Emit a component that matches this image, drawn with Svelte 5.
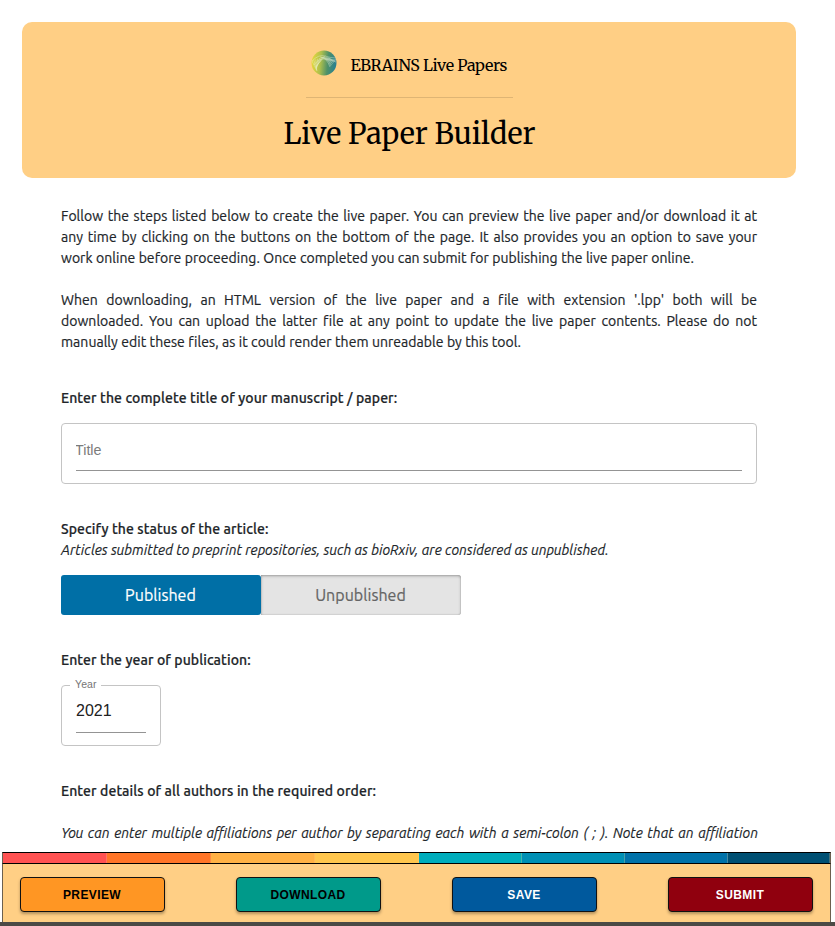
<script>
  const paragraphs = [
    [
      ['Follow the steps listed below to create the live paper. You can preview the live paper and/or download it at', 696],
      ['any time by clicking on the buttons on the bottom of the page. It also provides you an option to save your', 696],
      ['work online before proceeding. Once completed you can submit for publishing the live paper online.', 633]
    ],
    [
      ["When downloading, an HTML version of the live paper and a file with extension '.lpp' both will be", 696],
      ['downloaded. You can upload the latter file at any point to update the live paper contents. Please do not', 696],
      ['manually edit these files, as it could render them unreadable by this tool.', 460]
    ]
  ];
  const stripes = ['#ff5252', '#ff7528', '#ffb145', '#ffc64d', '#00adbc', '#0090b5', '#0072a9', '#005073'];
  const actions = [
    { label: 'PREVIEW', bg: '#ff9623', fg: '#000' },
    { label: 'DOWNLOAD', bg: '#009a8a', fg: '#000' },
    { label: 'SAVE', bg: '#00599d', fg: '#fff' },
    { label: 'SUBMIT', bg: '#90000e', fg: '#fff' }
  ];
  const rays = Array.from({ length: 8 }, (_, i) => i);
  let title = $state('');
  let year = $state('2021');
  let published = $state(true);
</script>

<main>
  <header>
    <div class="brand">
      <svg width="26" height="26" viewBox="0 0 26 26" aria-hidden="true">
        <defs>
          <linearGradient id="globe" x1="0" x2="1" y1=".45" y2=".55">
            <stop offset="0" stop-color="#e6d83c" />
            <stop offset=".35" stop-color="#b0c04c" />
            <stop offset=".65" stop-color="#4f9168" />
            <stop offset="1" stop-color="#277f94" />
          </linearGradient>
          <clipPath id="disc"><circle cx="13" cy="13" r="12.5" /></clipPath>
        </defs>
        <circle cx="13" cy="13" r="12.5" fill="url(#globe)" />
        <g clip-path="url(#disc)" fill="none" stroke="#eef5dc" stroke-width=".5" opacity=".75">
          {#each rays as i}
            <path d={`M${6 - i * 0.2} ${21 - i * 0.6} L${1 + i * 1.9} ${11 - i * 0.75}`} />
            <path d={`M${9 + i * 1.2} ${7 + i * 0.1} Q${16 + i} ${8 + i * 0.5} ${19 + i * 0.9} ${17 - i * 1.1}`} />
          {/each}
          <path d="M1 11 Q8 4 14 6 T25 8 M3 15 Q8 8 14 9 T25 12" />
        </g>
      </svg>
      <span>EBRAINS Live Papers</span>
    </div>
    <h1>Live Paper Builder</h1>
  </header>

  <div class="content">
    {#each paragraphs as lines}
      <div class="para">
        {#each lines as [text, width]}<div class="line" style:width={`${width}px`}>{text}</div>{/each}
      </div>
    {/each}

    <section class="first">
      <h2>Enter the complete title of your manuscript / paper:</h2>
      <label class="field wide"><input placeholder="Title" bind:value={title} /></label>
    </section>

    <section>
      <h2>Specify the status of the article:</h2>
      <div class="note">Articles submitted to preprint repositories, such as bioRxiv, are considered as unpublished.</div>
      <div class="toggle">
        <button class:on={published} onclick={() => (published = true)}>Published</button>
        <button class:on={!published} onclick={() => (published = false)}>Unpublished</button>
      </div>
    </section>

    <section>
      <h2>Enter the year of publication:</h2>
      <label class="field year"><span>Year</span><input bind:value={year} /></label>
    </section>

    <section>
      <h2>Enter details of all authors in the required order:</h2>
      <div class="note authors">You can enter multiple affiliations per author by separating each with a semi-colon ( ; ). Note that an affiliation</div>
    </section>
  </div>
</main>

<footer>
  <div class="stripes">
    {#each stripes as color}<i style:background={color}></i>{/each}
  </div>
  <div class="actions">
    {#each actions as a}
      <button style:background={a.bg} style:color={a.fg}>{a.label}</button>
    {/each}
  </div>
  <div class="edge"></div>
</footer>

<style>
  :global(body) { margin: 0; background: #fff; overflow: hidden; }
  * { box-sizing: border-box; }
  main { width: 835px; height: 926px; overflow: hidden; padding: 22px 39px 0 22px; font: 400 14px/21px Ubuntu, 'Noto Sans', sans-serif; color: #212529; }
  header { height: 156px; border-radius: 10px; background: #ffcf85; color: #000; display: flex; flex-direction: column; align-items: center; font-family: Merriweather, 'DejaVu Serif Condensed', 'DejaVu Serif', serif; }
  .brand { width: 207px; height: 76px; padding: 29px 6px 0 5px; display: flex; justify-content: space-between; border-bottom: 1px solid #dfb574; font-size: 16px; line-height: 28px; letter-spacing: -.33px; white-space: nowrap; }
  .brand svg { margin-top: -1px; }
  .brand span { width: 156px; }
  h1 { margin: 15px 0 0 1px; font-size: 28.8px; line-height: 42px; font-weight: 400; white-space: nowrap; }
  .content { width: 735px; padding: 28px 0 0 39px; }
  .para { margin: 0 0 21px; letter-spacing: .04px; -webkit-text-stroke: .2px currentColor; }
  .line { white-space: nowrap; text-align: justify; text-align-last: justify; }
  .first { margin-top: 35px; }
  section { margin-bottom: 35px; }
  h2 { margin: 0; font-size: 14px; line-height: 21px; font-weight: 500; letter-spacing: .105px; -webkit-text-stroke: .2px currentColor; }
  .note { font-style: italic; white-space: nowrap; -webkit-text-stroke: .15px currentColor; }
  .field { position: relative; display: block; height: 61px; margin-top: 14px; border: 1px solid #c4c4c4; border-radius: 4px; padding: 12px 14px; }
  .year { width: 100px; }
  .field input { display: block; width: 100%; height: 35px; padding: 0 0 8px; border: 0; border-bottom: 1px solid #949494; outline: 0; background: none; font: 16px 'Liberation Sans', sans-serif; color: #212121; }
  .wide input { font-size: 14.3px; padding-bottom: 6px; text-indent: -1px; }
  .field input::placeholder { color: #7b7b7b; opacity: 1; }
  .field span { position: absolute; left: 8px; top: -9px; padding: 0 4px 0 5px; background: #fff; color: #757575; font: 10.5px/14px 'Liberation Sans', sans-serif; letter-spacing: .1px; }
  .toggle { display: flex; width: 400px; height: 40px; margin-top: 14px; }
  .toggle button { flex: 1; border: 0; padding: 0 1px 0 0; border-radius: 0 3px 3px 0; background: #e4e4e4; color: #646464; box-shadow: inset 0 1px 3px rgba(0,0,0,.3), inset 0 0 1px rgba(0,0,0,.35); font: 400 16px/40px Ubuntu, 'Noto Sans', sans-serif; letter-spacing: .04px; -webkit-text-stroke: .2px currentColor; }
  .toggle .on { border-radius: 3px; background: #006fa6; color: #fff; box-shadow: none; }
  .authors { width: 697px; margin-top: 21px; text-align: justify; text-align-last: justify; }
  footer { position: fixed; left: 0; top: 852px; width: 835px; height: 74px; display: flex; flex-direction: column; }
  .stripes { height: 12px; margin: 0 4px 0 2px; display: grid; grid-template-columns: repeat(4, 104fr) repeat(3, 103fr) 102fr; border: 1px solid #000; border-left-color: #6b604f; border-right-color: #6b604f; }
  .stripes i { border-right: 1px solid rgba(255,200,140,.28); }
  .actions { height: 58px; margin: 0 4px 0 2px; padding: 13px 17.5px 0 16.5px; display: flex; justify-content: space-between; background: #ffcf85; border: solid #6b604f; border-width: 0 1px; }
  .actions button { width: 145px; height: 35px; padding: 0; border: 1px solid #111; border-radius: 4px; font: 700 12px 'Liberation Sans', sans-serif; letter-spacing: .4px; box-shadow: 0 2px 3px rgba(0,0,0,.3); }
  .edge { height: 4px; background: #4c4a46; }
</style>
